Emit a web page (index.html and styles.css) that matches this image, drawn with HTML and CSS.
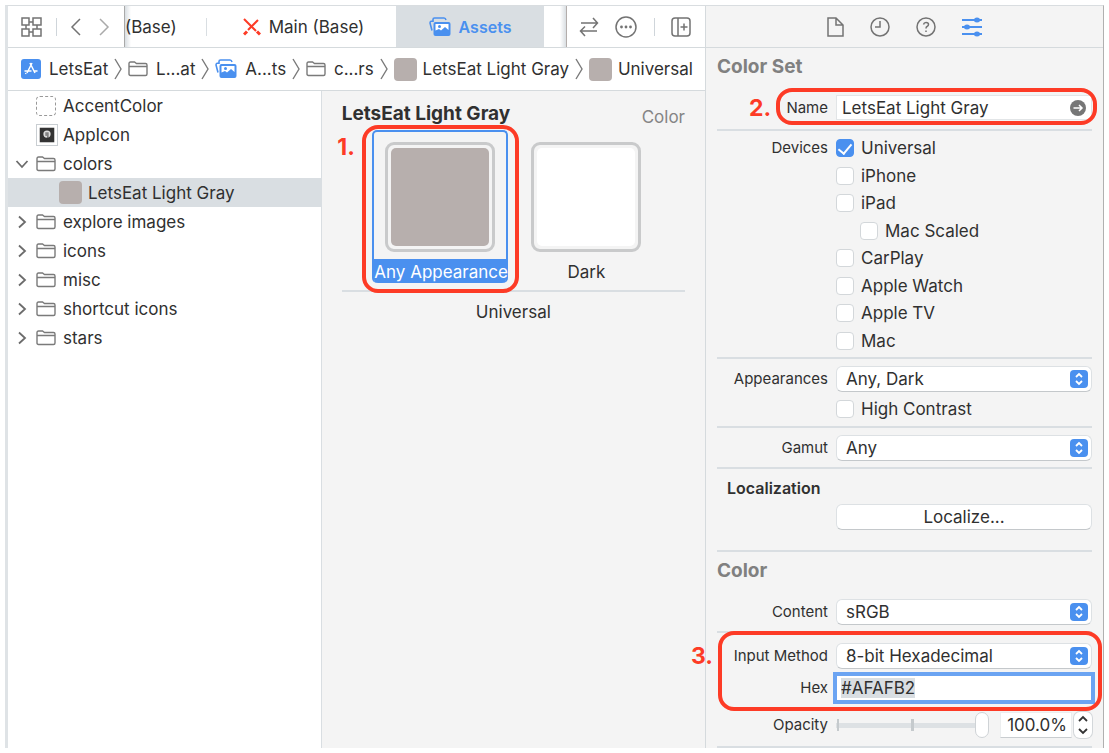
FILE: index.html
```html
<!DOCTYPE html>
<html lang="en">
<head>
<meta charset="utf-8">
<title>Assets</title>
<link rel="stylesheet" href="styles.css">
</head>
<body>
<svg class="defs" aria-hidden="true">
  <symbol id="folder" viewBox="0 0 20 16"><path d="M1 13V2.500Q1 1 2.500 1H6.500L8.500 2.500H17.500Q19 2.500 19 4V13Q19 14.500 17.500 14.500H2.500Q1 14.500 1 13ZM1 5.500H19"/></symbol>
  <symbol id="divider" viewBox="0 0 8 22"><path d="M1 1L7 11L1 21"/></symbol>
  <symbol id="right" viewBox="0 0 10 14"><path d="M2 1.500L8 7L2 12.500"/></symbol>
  <symbol id="photos" viewBox="0 0 22 20">
    <path d="M3 13.500L1 6Q1 4.500 2 4.200H4V2.500Q4 1 5.500 1H15Q16.500 1 17 3" fill="none" stroke="currentColor" stroke-width="1.600"/>
    <rect x="4.500" y="5" width="17" height="14" rx="2" fill="currentColor"/>
    <path d="M6.500 13.500V7H19.500V13L16 10L12 13.500L10 12Z" fill="#fff"/>
    <circle cx="10.500" cy="9.500" r="1.500" fill="currentColor"/>
  </symbol>
  <symbol id="updown" viewBox="0 0 18 18"><path d="M6 7L9 4L12 7M6 11L9 14L12 11"/></symbol>
</svg>
<div class="window">
  <main class="editor">
    <div class="tabbar">
      <div class="history">
        <button class="icon-button" aria-label="Related items"><svg width="21" height="20" viewBox="0 0 21 20"><path d="M1 1H8V8H1ZM12 1H20V8H12ZM1 12H8V19H1ZM12 12H20V19H12ZM8 5H12M16 8V12M12 15H8M5 12V8"/></svg></button>
        <span class="rule"></span>
        <button class="icon-button back" aria-label="Back"><svg width="11" height="18" viewBox="0 0 11 18"><path d="M10 1L2 9L10 17"/></svg></button>
        <button class="icon-button forward" aria-label="Forward"><svg width="11" height="18" viewBox="0 0 11 18"><path d="M1 1L9 9L1 17"/></svg></button>
      </div>
      <div class="tabs">
        <button class="tab tab-first">(Base)</button>
        <button class="tab tab-main"><svg class="cross" width="18" height="18" viewBox="0 0 18 18"><path d="M1 1L13 13M15 2L5 12" stroke-width="2"/><path d="M1 16.500L4 13.500M14 13.500L17 16.500" stroke-width="3"/></svg>Main (Base)</button>
        <button class="tab tab-active"><svg width="22" height="20"><use href="#photos"/></svg>Assets</button>
      </div>
      <div class="actions">
        <button class="icon-button" aria-label="Swap"><svg width="20" height="20" viewBox="0 0 20 20"><path d="M2 6H18M14 1L18.500 6L14 11M18 14H2M6 9.500L1.500 14L6 19"/></svg></button>
        <button class="icon-button" aria-label="Options"><svg width="22" height="22" viewBox="0 0 22 22"><circle cx="11" cy="11" r="10"/><g class="dots"><circle cx="6.500" cy="11" r="1.400"/><circle cx="11" cy="11" r="1.400"/><circle cx="15.500" cy="11" r="1.400"/></g></svg></button>
        <span class="rule"></span>
        <button class="icon-button" aria-label="Add editor"><svg width="20" height="20" viewBox="0 0 20 20"><rect x="1" y="1" width="18" height="18" rx="3"/><path d="M7 1V19M9.500 10H16.500M13 6.500V13.500"/></svg></button>
      </div>
    </div>
    <nav class="crumbs" aria-label="Path">
      <span class="crumb"><svg width="20" height="20" viewBox="0 0 20 20"><rect width="20" height="20" rx="3" fill="#4a90ef"/><path d="M11 4L6 14M9 4L14 14M3.500 12H10.500M13.500 12H16.500M4.500 15L5 14" stroke="#fff" stroke-width="1.500" fill="none"/></svg>LetsEat</span>
      <svg class="sep" width="8" height="22"><use href="#divider"/></svg>
      <span class="crumb"><svg class="line" width="20" height="16"><use href="#folder"/></svg>L...at</span>
      <svg class="sep" width="8" height="22"><use href="#divider"/></svg>
      <span class="crumb"><svg class="blue" width="22" height="20"><use href="#photos"/></svg>A...ts</span>
      <svg class="sep" width="8" height="22"><use href="#divider"/></svg>
      <span class="crumb"><svg class="line" width="20" height="16"><use href="#folder"/></svg>c...rs</span>
      <svg class="sep" width="8" height="22"><use href="#divider"/></svg>
      <span class="crumb"><i class="chip"></i>LetsEat Light Gray</span>
      <svg class="sep" width="8" height="22"><use href="#divider"/></svg>
      <span class="crumb"><i class="chip"></i>Universal</span>
    </nav>
    <div class="workspace">
      <ul class="outline">
        <li><span class="twist"></span><i class="empty-chip"></i>AccentColor</li>
        <li><span class="twist"></span><svg class="app-icon" width="22" height="22" viewBox="0 0 22 22"><rect x="3" y="3" width="16" height="16" fill="#333"/><circle cx="11" cy="10" r="4" fill="#ddd"/><path d="M10 8V12M12 8V16" stroke="#333" stroke-width="1"/></svg>AppIcon</li>
        <li><span class="twist"><svg width="14" height="10" viewBox="0 0 14 10"><path d="M1.500 2L7 8L12.500 2"/></svg></span><svg class="line" width="20" height="16"><use href="#folder"/></svg>colors</li>
        <li class="selected"><i class="chip"></i>LetsEat Light Gray</li>
        <li><span class="twist"><svg width="10" height="14"><use href="#right"/></svg></span><svg class="line" width="20" height="16"><use href="#folder"/></svg>explore images</li>
        <li><span class="twist"><svg width="10" height="14"><use href="#right"/></svg></span><svg class="line" width="20" height="16"><use href="#folder"/></svg>icons</li>
        <li><span class="twist"><svg width="10" height="14"><use href="#right"/></svg></span><svg class="line" width="20" height="16"><use href="#folder"/></svg>misc</li>
        <li><span class="twist"><svg width="10" height="14"><use href="#right"/></svg></span><svg class="line" width="20" height="16"><use href="#folder"/></svg>shortcut icons</li>
        <li><span class="twist"><svg width="10" height="14"><use href="#right"/></svg></span><svg class="line" width="20" height="16"><use href="#folder"/></svg>stars</li>
      </ul>
      <section class="canvas">
        <header class="canvas-head"><h1>LetsEat Light Gray</h1><span>Color</span></header>
        <div class="wells">
          <figure class="well well-selected">
            <div class="frame"><div class="color"></div></div>
            <figcaption>Any Appearance</figcaption>
            <span class="ring"></span><b class="step">1.</b>
          </figure>
          <figure class="well">
            <div class="frame"><div class="color white"></div></div>
            <figcaption>Dark</figcaption>
          </figure>
        </div>
        <p class="idiom">Universal</p>
      </section>
    </div>
  </main>
  <aside class="inspector">
    <div class="modes">
      <button class="icon-button" aria-label="File"><svg width="17" height="20" viewBox="0 0 17 20"><path d="M1 1H9L16 8V19H1ZM9 1V8H16"/></svg></button>
      <button class="icon-button" aria-label="History"><svg width="20" height="20" viewBox="0 0 20 20"><circle cx="10" cy="10" r="9"/><path d="M10 4V10H5"/></svg></button>
      <button class="icon-button" aria-label="Help"><svg width="20" height="20" viewBox="0 0 20 20"><circle cx="10" cy="10" r="9"/><path d="M7.500 7.500Q8 5.500 10 5.500Q12.500 5.500 12.500 7.500Q12.500 8.700 11 9.500Q10 10 10 11.500M10 13.500V15"/></svg></button>
      <button class="icon-button active" aria-label="Attributes"><svg width="20" height="20" viewBox="0 0 20 20"><path d="M0 3H20M0 10H20M0 17H20"/><g class="dots"><ellipse cx="15" cy="3" rx="3" ry="2.500"/><ellipse cx="5" cy="10" rx="3" ry="2.500"/><ellipse cx="15" cy="17" rx="3" ry="2.500"/></g></svg></button>
    </div>
    <form class="attributes">
      <h2>Color Set</h2>
      <div class="group group-name">
        <div class="row callout name-row"><label for="name">Name</label><div class="field"><input id="name" type="text" value="LetsEat Light Gray"><svg class="go" width="16" height="16" viewBox="0 0 16 16"><circle cx="8" cy="8" r="8" fill="#767676"/><path d="M3.500 8H12M9 5L12 8L9 11" fill="none" stroke="#fff" stroke-width="1.500"/></svg></div><span class="ring"></span><b class="step">2.</b></div>
      </div>
      <fieldset class="group devices">
        <legend>Devices</legend>
        <div class="checks">
          <label><input type="checkbox" checked>Universal</label>
          <label><input type="checkbox">iPhone</label>
          <label><input type="checkbox">iPad</label>
          <label class="nested"><input type="checkbox">Mac Scaled</label>
          <label><input type="checkbox">CarPlay</label>
          <label><input type="checkbox">Apple Watch</label>
          <label><input type="checkbox">Apple TV</label>
          <label><input type="checkbox">Mac</label>
        </div>
      </fieldset>
      <div class="group group-appearance">
        <div class="row"><label for="appearances">Appearances</label><div class="field"><select id="appearances"><option>Any, Dark</option></select><svg class="updown" width="18" height="18"><use href="#updown"/></svg></div></div>
        <div class="row"><span></span><div class="checks"><label><input type="checkbox">High Contrast</label></div></div>
      </div>
      <div class="group group-gamut">
        <div class="row"><label for="gamut">Gamut</label><div class="field"><select id="gamut"><option>Any</option></select><svg class="updown" width="18" height="18"><use href="#updown"/></svg></div></div>
      </div>
      <div class="group group-local">
        <h3>Localization</h3>
        <div class="row"><span></span><button type="button" class="push">Localize...</button></div>
      </div>
      <h2>Color</h2>
      <div class="group group-content">
        <div class="row"><label for="content">Content</label><div class="field"><select id="content"><option>sRGB</option></select><svg class="updown" width="18" height="18"><use href="#updown"/></svg></div></div>
      </div>
      <div class="group group-value">
        <div class="callout hex-rows">
          <div class="row"><label for="method">Input Method</label><div class="field"><select id="method"><option>8-bit Hexadecimal</option></select><svg class="updown" width="18" height="18"><use href="#updown"/></svg></div></div>
          <div class="row"><label for="hex">Hex</label><div class="field"><input id="hex" type="text" value="#AFAFB2"></div></div>
          <span class="ring"></span><b class="step">3.</b>
        </div>
        <div class="row opacity-row"><label for="opacity">Opacity</label>
          <div class="opacity">
            <input id="opacity" type="range" min="0" max="100" value="100">
            <input class="percent" type="text" value="100.0%" aria-label="Opacity value">
            <button type="button" class="stepper" aria-label="Step opacity"><svg width="18" height="26" viewBox="0 0 18 26"><path d="M5 9L9 5L13 9M5 17L9 21L13 17"/></svg></button>
          </div>
        </div>
      </div>
    </form>
  </aside>
</div>
<script src="main.js"></script>
</body>
</html>
```
FILE: main.js
```js
const hex = document.getElementById("hex");
hex.focus();
hex.select();
```
FILE: styles.css
```css
* { box-sizing: border-box; }
body { margin: 0; background: #fff; color: #303030; font: 17px/20px Inter, "Liberation Sans", sans-serif; }
.defs { position: absolute; width: 0; height: 0; }
button, input, select { font: inherit; color: inherit; margin: 0; }
button { cursor: pointer; }
svg { flex: none; display: block; }
.window { display: flex; min-height: calc(100vh - 10px); margin: 5px; border-top: 1px solid #d9dde0; border-left: 3px solid #dfe3e6; border-right: 1px solid #b0b0b0; }
.editor { flex: 1; min-width: 0; display: flex; flex-direction: column; }
.icon-button { display: flex; padding: 0; border: 0; background: none; }
.icon-button svg { fill: none; stroke: #737373; stroke-width: 1.5; }
.icon-button .dots { fill: #737373; stroke: none; }
.rule { width: 1px; height: 18px; background: #cfd5da; }

.tabbar { display: flex; height: 42px; border-bottom: 1px solid #d5dadd; }
.history { display: flex; align-items: center; gap: 14px; width: 117px; padding-left: 13px; border-right: 1px solid #a9a9a9; }
.back { margin-left: -1px; }
.forward { margin-left: 4px; }
.forward svg { stroke: #aaa; }
.tabs { flex: 1; display: flex; border-right: 1px solid #b3adab; background: linear-gradient(270deg, #d9dee2, transparent 6px), linear-gradient(90deg, #d9dee2, #fff 6px); }
.tab { display: flex; align-items: center; justify-content: center; gap: 8px; border: 0; background: none; padding: 0; }
.tab-first { width: 82px; justify-content: flex-start; position: relative; }
.tab-first::after { content: ""; position: absolute; right: 0; width: 1px; height: 18px; background: #d9dee2; }
.tab-main { flex: 1; padding-left: 4px; }
.tab-active { width: 148px; margin-right: 22px; background: #d9dee2; color: #4a90ef; font-size: 16px; font-weight: 600; }
.cross { fill: none; stroke: #fd3b26; }
.actions { display: flex; align-items: center; justify-content: space-between; width: 138px; padding: 0 14px 0 12px; }

.crumbs { display: flex; align-items: center; justify-content: space-between; height: 43px; padding: 0 12px 0 13px; border-bottom: 1px solid #d5dadd; white-space: nowrap; }
.crumb { display: flex; align-items: center; gap: 8px; }
.crumb:has(.chip) { gap: 6px; }
.sep, .line { fill: none; stroke: #7a7a7a; stroke-width: 1.4; }
.blue { color: #4a90ef; }
.chip { flex: none; width: 23px; height: 23px; border-radius: 4px; background: #b7afad; }

.workspace { flex: 1; display: flex; }
.outline { width: 45%; margin: 0; padding: 0; list-style: none; border-right: 1px solid #d9dee2; }
.outline li { display: flex; align-items: center; gap: 7px; height: 29px; padding-left: 6px; }
.outline .selected { padding-left: 51px; gap: 6px; background: #d9dee2; }
.twist { display: flex; justify-content: center; width: 15px; }
.twist svg { fill: none; stroke: #6c6c6c; stroke-width: 1.8; }
.empty-chip { width: 20px; height: 20px; border: 1px dashed #999; border-radius: 4px; }
.app-icon { border: 1px solid #c9ced2; margin-right: -2px; }
.canvas { flex: 1; padding: 13px 20px; background: #f4f4f4; }
.canvas-head { display: flex; justify-content: space-between; color: #858585; }
.canvas-head h1 { margin: 0; font-size: 19px; line-height: 20px; font-weight: 700; color: #303030; }
.canvas-head span { padding-top: 3px; }
.wells { display: flex; justify-content: center; gap: 10px; padding: 3px 0 7px; border-bottom: 2px solid #d9dee2; }
.well { position: relative; display: flex; flex-direction: column; align-items: center; width: 136px; margin: 0; padding-top: 10px; border: 2px solid transparent; border-bottom: 0; border-radius: 5px; }
.well-selected { border-color: #4a90ef; }
.frame { width: 110px; height: 110px; padding: 3px; border: 3px solid #c9cacb; border-radius: 9px; }
.color { height: 100%; border-radius: 5px; background: #b7afad; }
.white { background: #fff; }
.well figcaption { align-self: stretch; margin-top: 7px; padding-top: 2px; line-height: 22px; text-align: center; white-space: nowrap; border-radius: 0 0 4px 4px; }
.well-selected figcaption { background: #4a90ef; color: #fff; }
.idiom { margin: 10px 0; text-align: center; }
.ring { position: absolute; border: 4px solid #fd3b26; border-radius: 16px; pointer-events: none; }
.step { position: absolute; color: #fd3b26; font-size: 23px; line-height: 24px; font-weight: 700; }
.well .ring { inset: -7px -13px -10px -12px; }
.well .step { left: -37px; top: 3px; }

.inspector { width: 398px; flex: none; border-left: 1px solid #d5dadd; background: #f4f4f4; }
.modes { display: flex; justify-content: center; align-items: center; gap: 26px; height: 42px; border-bottom: 1px solid #d5dadd; }
.modes .active svg { stroke: #4a90ef; stroke-width: 2; }
.modes .active .dots { fill: #4a90ef; }
.attributes { padding: 8px 11px 0; }
h2 { margin: 0; color: #808080; font-size: 19px; line-height: 22px; font-weight: 700; }
h3 { margin: 0 0 6px 10px; font-size: 16px; line-height: 20px; font-weight: 600; }
.group { margin: 0; padding: 0; border: 0; border-bottom: 2px solid #d9dee2; }
.row, .devices { display: grid; grid-template-columns: 111px minmax(0, 1fr); column-gap: 8px; align-items: center; }
.row > label, .devices legend { font-size: 15px; text-align: right; white-space: nowrap; }
.field { position: relative; display: flex; }
.field select, .push { width: 100%; height: 26px; padding: 0 9px; border: 1px solid #dde1e4; border-bottom-color: #c4c8cb; border-radius: 6px; background: #fff; appearance: none; }
.updown { position: absolute; right: 4px; top: 4px; border-radius: 4px; background: #4a90ef; fill: none; stroke: #fff; stroke-width: 1.8; pointer-events: none; }
.group-name { padding: 17px 0 9px; }
.callout { position: relative; }
.name-row .ring { inset: -7px -5px -5px 59px; }
.name-row .step { left: 32px; top: 1px; }
.field input { width: 100%; height: 25px; padding: 0 5px; border: 1px solid #e2e5e7; background: #fff; outline: 0; }
.go { position: absolute; right: 6px; top: 5px; }
.devices { padding: 7px 0 6px; }
.devices legend { float: left; width: 111px; padding: 0; align-self: start; }
.checks { display: flex; flex-direction: column; justify-content: space-between; }
.devices .checks { grid-column: 2; min-height: 213px; }
.checks label { display: flex; align-items: center; gap: 7px; }
.checks .nested { padding-left: 24px; }
.checks input { appearance: none; width: 18px; height: 18px; border: 1px solid #d3d7da; border-radius: 4px; background: #fff; }
.checks input:checked { border-color: #4a90ef; background: #4a90ef; display: grid; place-items: center; }
.checks input:checked::before { content: ""; width: 6px; height: 11px; margin-bottom: 2px; border: solid #fff; border-width: 0 2px 2px 0; transform: rotate(40deg); }
.group-appearance { display: grid; gap: 7px; padding: 7px 0; }
.group-gamut { padding: 7px 0 6px; }
.group-local { padding: 9px 0 20px; margin-bottom: 8px; }
.group-content { padding: 17px 0 6px; }
.group-value { padding: 10px 0 8px; }
.hex-rows { display: grid; gap: 3px; }
.hex-rows .ring { inset: -12px -10px -7px 1px; }
.hex-rows .step { left: -26px; top: 1px; }
#hex { height: 32px; margin: 0 -3px; width: calc(100% + 6px); flex: none; padding: 0 4px; border: 4px solid #6ba4f2; }
#hex::selection { background: #d9dee2; color: #303030; }
.opacity-row { margin-top: 8px; }
.opacity { display: flex; align-items: center; }
#opacity { appearance: none; flex: 1; min-width: 0; height: 26px; background: linear-gradient(#c5cacd, #c5cacd) 1px 50% / 2px 12px no-repeat, linear-gradient(#c5cacd, #c5cacd) 50% 50% / 3px 12px no-repeat, linear-gradient(#dde1e4, #dde1e4) 0 50% / 100% 5px no-repeat; }
#opacity::-webkit-slider-thumb { appearance: none; width: 14px; height: 26px; border: 1px solid #cfd3d6; border-radius: 7px; background: #fff; }
.percent { width: 72px; height: 26px; margin: 0 2px 0 11px; padding: 0 4px; border: 1px solid #eceeef; border-bottom-color: #c9cdd0; background: #fff; text-align: right; }
.stepper { width: 18px; height: 26px; padding: 0; border: 0; border-radius: 6px; background: #fff; box-shadow: 0 0 0 1px #d3d7da; }
.stepper svg { fill: none; stroke: #333; stroke-width: 1.8; }
```
